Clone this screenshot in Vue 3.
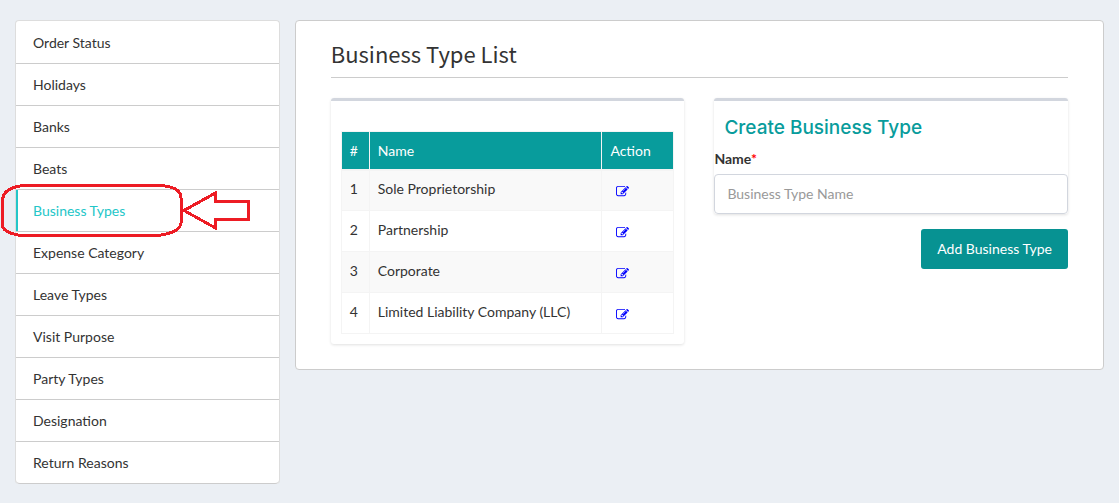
<script setup>
const menu = [
  'Order Status', 'Holidays', 'Banks', 'Beats', 'Business Types', 'Expense Category',
  'Leave Types', 'Visit Purpose', 'Party Types', 'Designation', 'Return Reasons',
]
const active = 'Business Types'
const types = ['Sole Proprietorship', 'Partnership', 'Corporate', 'Limited Liability Company (LLC)']
</script>

<template>
  <div class="page">
    <aside class="side">
      <nav class="menu">
        <div v-for="item in menu" :key="item" class="entry" :class="{ active: item === active }">
          <a href="#">{{ item }}</a>
          <svg v-if="item === active" class="marker" width="260" height="60" viewBox="0 0 260 60" aria-hidden="true">
            <path d="M24 5.500H160Q182 6.500 182 18V43Q181 52 162 55H19Q3.500 52 3.500 45V21Q3.500 8 24 5.500Z" />
            <path d="M185 30.500L216.500 13V21.500H249V39.500H216.500V48Z" />
          </svg>
        </div>
      </nav>
    </aside>
    <main class="main">
      <section class="panel">
        <h1>Business Type List</h1>
        <div class="columns">
          <div class="box list">
            <table>
              <thead>
                <tr><th class="num">#</th><th>Name</th><th class="action">Action</th></tr>
              </thead>
              <tbody>
                <tr v-for="(name, i) in types" :key="name">
                  <td>{{ i + 1 }}</td>
                  <td>{{ name }}</td>
                  <td>
                    <button type="button" class="edit" :aria-label="'Edit ' + name">
                      <svg width="13" height="13" viewBox="0 0 1792 1792" aria-hidden="true">
                        <path d="M888 1184l116-116-152-152-116 116v56h96v96h56zm440-720q-16-16-33 1L945 815q-17 17-1 33t33-1l350-350q17-17 1-33zm80 594v190q0 119-84.500 203.500T1120 1536H288q-119 0-203.500-84.500T0 1248V416q0-119 84.500-203.500T288 128h832q63 0 117 25 15 7 18 23 3 17-9 29l-49 49q-14 14-32 8-23-6-45-6H288q-66 0-113 47t-47 113v832q0 66 47 113t113 47h832q66 0 113-47t47-113v-126q0-13 9-22l64-64q15-15 35-7t20 29zm-96-738l288 288-672 672H640V992zm444 132l-92 92-288-288 92-92q28-28 68-28t68 28l152 152q28 28 28 68t-28 68z" />
                      </svg>
                    </button>
                  </td>
                </tr>
              </tbody>
            </table>
          </div>
          <form @submit.prevent>
            <div class="box fields">
              <h2>Create Business Type</h2>
              <label for="type-name">Name<span>*</span></label>
              <input id="type-name" type="text" placeholder="Business Type Name">
            </div>
            <button type="submit" class="add">Add Business Type</button>
          </form>
        </div>
      </section>
    </main>
  </div>
</template>

<style>
body {
  background: #ebeff4;
}
</style>

<style scoped>
* {
  box-sizing: border-box;
}
.page {
  display: flex;
  align-items: flex-start;
  padding: 20px 0;
  font: 14px/20px Lato, "Liberation Sans", sans-serif;
  color: #333;
}
.side {
  flex: 0 0 25%;
  padding-left: 15px;
}
.menu {
  padding-top: 1px;
  background: #fff;
  border: 1px solid #ddd;
  border-bottom: 0;
  border-radius: 4px;
}
.entry {
  position: relative;
  height: 42px;
  border-bottom: 1px solid #ccc;
}
.entry:last-child {
  border-radius: 0 0 4px 4px;
}
.entry a {
  display: block;
  height: 100%;
  padding: 11px 17px;
  line-height: 20px;
  color: #333;
  text-decoration: none;
}
.entry.active a {
  border-left: 2px solid #23c6c8;
  padding-left: 15px;
  color: #23c6c8;
}
.marker {
  position: absolute;
  left: -17px;
  top: -10px;
  z-index: 1;
  pointer-events: none;
}
.marker path {
  fill: none;
  stroke: #ed1c24;
  stroke-width: 3;
  shape-rendering: crispEdges;
}
.main {
  flex: 1;
  min-width: 0;
  padding: 0 15px;
}
.panel {
  padding: 16px 35px 25px;
  background: #fff;
  border: 1px solid #ccc;
  border-radius: 4px;
}
h1 {
  margin: 0 0 20px;
  padding-bottom: 8px;
  border-bottom: 1px solid #ccc;
  font: 22px/32px "Noto Sans CJK SC", "Noto Sans", sans-serif;
}
.columns {
  display: grid;
  grid-template-columns: 1fr 1fr;
  gap: 30px;
  align-items: start;
}
.box {
  border-top: 3px solid #d2d6de;
  border-radius: 3px;
  box-shadow: 0 1px 3px rgba(0, 0, 0, 0.12);
}
.list {
  padding: 30px 10px 10px;
}
table {
  width: 100%;
  border-collapse: collapse;
}
th,
td {
  height: 41px;
  padding: 0 8px 2px;
  border: 1px solid #f4f4f4;
  text-align: left;
}
th {
  height: 38px;
  padding: 1px 8px 0;
  border-bottom-width: 2px;
  background: #089c9c;
  color: #fff;
  font-weight: 400;
}
.num {
  width: 28px;
}
.action {
  width: 72px;
}
tbody tr:nth-child(odd) {
  background: #f9f9f9;
}
.edit {
  display: block;
  padding: 4px 6px 0;
  border: 0;
  background: none;
  color: #00f;
}
.edit svg {
  display: block;
  fill: currentColor;
}
.fields {
  display: flex;
  flex-direction: column;
}
h2 {
  margin: 0;
  padding: 13px 10px 8px;
  color: #089c9c;
  font: 500 19px/27px Inter, sans-serif;
}
label {
  margin-bottom: 5px;
  font-weight: 700;
}
label span {
  color: #f00;
}
input {
  width: 100%;
  height: 40px;
  padding: 0 12px 2px;
  border: 1px solid #d2d6de;
  border-radius: 4px;
  background: #fff;
  font: inherit;
  color: #333;
}
input::placeholder {
  color: #999;
}
.add {
  display: block;
  height: 40px;
  margin: 15px 0 0 auto;
  padding: 0 16px;
  border: 0;
  border-radius: 3px;
  background: #079292;
  color: #fff;
  font: inherit;
}
</style>
